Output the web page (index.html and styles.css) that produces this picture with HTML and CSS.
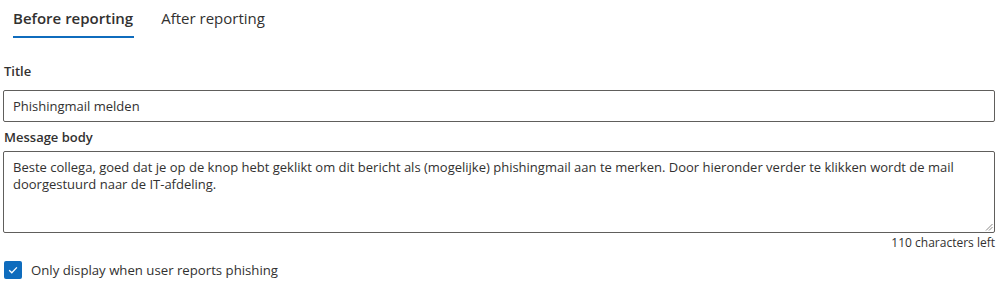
FILE: index.html
```html
<!DOCTYPE html>
<html>
<head>
<meta charset="utf-8">
<link rel="stylesheet" href="styles.css">
</head>
<body>
<div class="page">
  <div class="tabs">
    <div class="tab tab-active">Before reporting</div>
    <div class="tab">After reporting</div>
  </div>
  <div class="field field-title">
    <div class="label">Title</div>
    <div class="input">Phishingmail melden</div>
  </div>
  <div class="field field-body">
    <div class="label">Message body</div>
    <div class="textarea">Beste collega, goed dat je op de knop hebt geklikt om dit bericht als (mogelijke) phishingmail aan te merken. Door hieronder verder te klikken wordt de mail doorgestuurd naar de IT-afdeling.<svg class="grip" width="8" height="8" viewBox="0 0 8 8"><path d="M1 7.5 L7.5 1 M4 7.5 L7.5 4" stroke="#8a8886" stroke-width="1"/></svg></div>
    <div class="counter">110 characters left</div>
  </div>
  <label class="check">
    <span class="box"><svg width="12" height="12" viewBox="0 0 12 12"><path d="M2.2 6.3 L4.8 8.8 L9.9 3.4" fill="none" stroke="#fff" stroke-width="1.3"/></svg></span>
    <span class="check-label">Only display when user reports phishing</span>
  </label>
</div>
</body>
</html>
```
FILE: styles.css
```css
html, body {
  margin: 0;
  padding: 0;
  background: #fff;
}
body {
  font-family: "Segoe UI", "Open Sans", "Noto Sans", sans-serif;
  color: #323130;
}
.page {
  width: 992px;
  padding: 0 7px 0 3px;
}
.tabs {
  display: flex;
  padding-left: 2px;
  height: 40px;
}
.tab {
  font-size: 15px;
  line-height: 20px;
  padding: 8px 8px 0;
  margin-right: 12px;
  height: 32px;
  box-sizing: border-box;
  color: #323130;
  position: relative;
}
.tab-active {
  font-weight: 600;
}
.tab-active::after {
  content: "";
  position: absolute;
  left: 8px;
  right: 7px;
  bottom: -6px;
  height: 2px;
  background: #0f6cbd;
}
.label {
  font-size: 13px;
  font-weight: 600;
  line-height: 18px;
  padding-left: 1px;
}
.field-title {
  margin-top: 22px;
}
.field-title .label {
  margin-bottom: 10px;
}
.input {
  height: 32px;
  box-sizing: border-box;
  border: 1px solid #605e5c;
  border-radius: 2px;
  font-size: 13px;
  line-height: 30px;
  padding: 0 9px;
}
.field-body {
  margin-top: 6px;
}
.field-body .label {
  margin-bottom: 5px;
}
.textarea {
  height: 82px;
  box-sizing: border-box;
  border: 1px solid #605e5c;
  border-radius: 2px;
  font-size: 13px;
  line-height: 17px;
  padding: 7px 9px;
  position: relative;
}
.grip {
  position: absolute;
  right: 1px;
  bottom: 1px;
}
.counter {
  text-align: right;
  font-size: 12px;
  line-height: 16px;
  color: #323130;
  margin-top: 2px;
}
.check {
  display: flex;
  align-items: center;
  gap: 9px;
  margin-top: 10px;
  padding-left: 1px;
}
.box {
  width: 18px;
  height: 18px;
  border-radius: 2px;
  background: #0f6cbd;
  display: flex;
  align-items: center;
  justify-content: center;
}
.check-label {
  font-size: 13.2px;
  line-height: 18px;
}
```
